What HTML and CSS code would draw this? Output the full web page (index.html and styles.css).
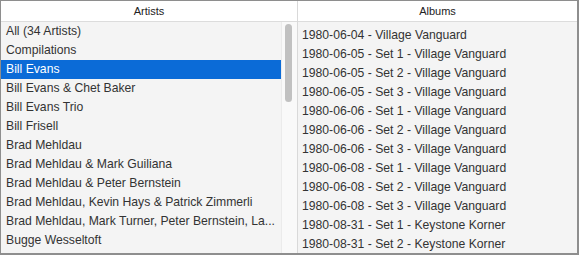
FILE: index.html
```html
<html lang="en">
<head>
    <meta charset="UTF-8">
    <meta name="viewport" content="width=device-width, initial-scale=1.0">
    <title>Music Browser</title>
    <link rel="stylesheet" href="styles.css">
</head>
<body>
    <div class="browser">
        <!-- Artists column -->
        <div class="pane artists-pane">
            <div class="pane-header">Artists</div>
            <div class="pane-body">
                <ul class="list artist-list">
                    <li>All (34 Artists)</li>
                    <li>Compilations</li>
                    <li class="selected">Bill Evans</li>
                    <li>Bill Evans &amp; Chet Baker</li>
                    <li>Bill Evans Trio</li>
                    <li>Bill Frisell</li>
                    <li>Brad Mehldau</li>
                    <li>Brad Mehldau &amp; Mark Guiliana</li>
                    <li>Brad Mehldau &amp; Peter Bernstein</li>
                    <li>Brad Mehldau, Kevin Hays &amp; Patrick Zimmerli</li>
                    <li>Brad Mehldau, Mark Turner, Peter Bernstein, La...</li>
                    <li>Bugge Wesseltoft</li>
                </ul>
                <div class="scrollbar">
                    <div class="scroll-thumb"></div>
                </div>
            </div>
        </div>

        <!-- Albums column -->
        <div class="pane albums-pane">
            <div class="pane-header">Albums</div>
            <div class="pane-body">
                <ul class="list album-list">
                    <li>1980-06-04 - Village Vanguard</li>
                    <li>1980-06-05 - Set 1 - Village Vanguard</li>
                    <li>1980-06-05 - Set 2 - Village Vanguard</li>
                    <li>1980-06-05 - Set 3 - Village Vanguard</li>
                    <li>1980-06-06 - Set 1 - Village Vanguard</li>
                    <li>1980-06-06 - Set 2 - Village Vanguard</li>
                    <li>1980-06-06 - Set 3 - Village Vanguard</li>
                    <li>1980-06-08 - Set 1 - Village Vanguard</li>
                    <li>1980-06-08 - Set 2 - Village Vanguard</li>
                    <li>1980-06-08 - Set 3 - Village Vanguard</li>
                    <li>1980-08-31 - Set 1 - Keystone Korner</li>
                    <li>1980-08-31 - Set 2 - Keystone Korner</li>
                </ul>
            </div>
        </div>
    </div>
</body>
</html>
```

FILE: styles.css
```css
body {
    margin: 0;
    padding: 0;
    font-family: "Liberation Sans", Arial, sans-serif;
    background-color: #fff;
}

.browser {
    box-sizing: border-box;
    width: 579px;
    height: 255px;
    display: grid;
    grid-template-columns: 297px 1fr;
    border: 1px solid #8e8e8e;
    border-right-width: 2px;
    border-bottom-width: 2px;
    overflow: hidden;
}

.pane {
    display: flex;
    flex-direction: column;
    min-height: 0;
}

.artists-pane {
    border-right: 1px solid #d9d9d9;
}

.pane-header {
    height: 20px;
    line-height: 20px;
    text-align: center;
    font-size: 11px;
    color: #222;
    background-color: #fff;
    border-bottom: 1px solid #dcdcdc;
}

.pane-body {
    flex: 1;
    display: flex;
    min-height: 0;
    background-color: #f4f4f4;
    overflow: hidden;
}

.list {
    list-style: none;
    margin: 0;
    padding: 0;
    flex: 1;
    min-width: 0;
}

.album-list {
    padding-top: 4px;
}

.list li {
    height: 19px;
    line-height: 19px;
    padding-left: 5px;
    font-size: 12.2px;
    color: #333;
    white-space: nowrap;
}

.album-list li {
    padding-left: 4px;
}

.list li.selected {
    background-color: #0b6bd7;
    color: #fff;
}

.scrollbar {
    width: 12px;
    padding: 2px 0 0 3px;
    background-color: #f9f9f9;
    border-left: 1px solid #ebebeb;
}

.scroll-thumb {
    width: 7px;
    height: 78px;
    border-radius: 4px;
    background-color: #c1c1c1;
}
```
